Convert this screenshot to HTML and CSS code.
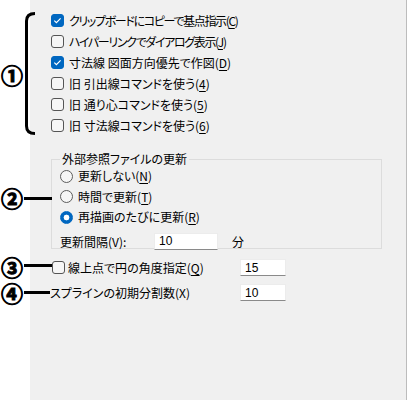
FILE: index.html
```html
<!DOCTYPE html>
<html lang="ja">
<head>
<meta charset="utf-8">
<link rel="stylesheet" href="styles.css">
</head>
<body>
<div class="page">
  <div class="panel">
    <div class="checks">
      <label class="row"><input type="checkbox" class="cb" checked><span class="tight">クリップボードにコピーで基点指示(<u>C</u>)</span></label>
      <label class="row"><input type="checkbox" class="cb"><span class="tight">ハイパーリンクでダイアログ表示(<u>J</u>)</span></label>
      <label class="row"><input type="checkbox" class="cb" checked><span>寸法線 図面方向優先で作図(<u>D</u>)</span></label>
      <label class="row"><input type="checkbox" class="cb"><span>旧 引出線コマンドを使う(<u>4</u>)</span></label>
      <label class="row"><input type="checkbox" class="cb"><span>旧 通り心コマンドを使う(<u>5</u>)</span></label>
      <label class="row"><input type="checkbox" class="cb"><span>旧 寸法線コマンドを使う(<u>6</u>)</span></label>
    </div>
    <fieldset class="group">
      <legend>外部参照ファイルの更新</legend>
      <label class="row"><input type="radio" name="upd" class="rb"><span>更新しない(<u>N</u>)</span></label>
      <label class="row"><input type="radio" name="upd" class="rb"><span>時間で更新(<u>T</u>)</span></label>
      <label class="row"><input type="radio" name="upd" class="rb" checked><span>再描画のたびに更新(<u>R</u>)</span></label>
      <div class="interval"><span class="ilabel">更新間隔(V):</span><input class="num wide" value="10"><span class="unit">分</span></div>
    </fieldset>
    <div class="opt opt3"><label class="olabel"><input type="checkbox" class="cb"><span>線上点で円の角度指定(<u>Q</u>)</span></label><input class="num" value="15"></div>
    <div class="opt opt4"><span class="olabel">スプラインの初期分割数(X)</span><input class="num" value="10"></div>
  </div>

  <div class="note n1">①</div>
  <svg class="bracket" width="40" height="140" viewBox="0 0 40 140"><path d="M35 13.5 Q26.5 13.5 26.5 21 V126 Q26.5 133.5 35 133.5" fill="none" stroke="#000" stroke-width="3"/></svg>
  <div class="note n2">②</div><div class="line l2"></div>
  <div class="note n3">③</div><div class="line l3"></div>
  <div class="note n4">④</div><div class="line l4"></div>
</div>
</body>
</html>
```

FILE: styles.css
```css
* { box-sizing: border-box; }
html, body { margin: 0; padding: 0; background: #fff; }
body {
  font-family: "Noto Sans CJK JP", "Noto Sans", sans-serif;
  font-size: 12px;
  font-feature-settings: "palt";
  color: #000;
}
.page { position: relative; width: 407px; height: 400px; }
.panel {
  margin-left: 30px;
  width: 377px;
  height: 400px;
  background: #f0f0f0;
  border-right: 1px solid #bcbcbc;
  padding-top: 10px;
}
.checks { padding-left: 21px; }
.row {
  display: flex;
  align-items: center;
  height: 21px;
  line-height: 14px;
  white-space: nowrap;
}
.tight { letter-spacing: -1.35px; }
u { text-underline-offset: 2px; }
input.cb, input.rb {
  appearance: none;
  -webkit-appearance: none;
  margin: 0 5px 0 0;
  width: 13px;
  height: 13px;
  flex: none;
  border: 1px solid #555;
  background: #f6f6f6;
}
input.cb { border-radius: 3px; }
input.cb:checked {
  background: #0067c0 url("data:image/svg+xml,%3Csvg xmlns='http://www.w3.org/2000/svg' width='13' height='13'%3E%3Cpath d='M3.3 6.6 L5.4 8.6 L9.6 4.4' fill='none' stroke='white' stroke-width='1.2'/%3E%3C/svg%3E") center/13px 13px no-repeat;
  border-color: #0067c0;
}
input.rb { border-radius: 50%; border-color: #5c5c5c; }
input.rb:checked {
  background: radial-gradient(circle, #fff 0 2.6px, #0067c0 3.2px);
  border-color: #0067c0;
}
.group {
  margin: 16px 0 0 21px;
  width: 331px;
  height: 97px;
  border: 1px solid #dcdcdc;
  padding: 0 0 0 8px;
  min-width: 0;
}
.group legend {
  padding: 0 2px;
  margin-left: 0;
  line-height: 14px;
}
.group .row { height: 20.5px; }
.interval {
  display: flex;
  align-items: center;
  height: 23px;
  margin-top: 2px;
}
.ilabel { width: 94px; }
.num {
  font: inherit;
  font-family: "Liberation Sans", sans-serif;
  font-size: 12px;
  width: 46px;
  height: 17px;
  border: 1px solid #ececec;
  border-bottom-color: #8a8a8a;
  background: #fff;
  padding: 0 4px;
  color: #000;
  outline: none;
}
.num.wide { width: 64px; }
.unit { margin-left: 14px; }
.opt {
  display: flex;
  align-items: center;
  height: 25px;
}
.opt3 { margin-top: 6px; padding-left: 22px; }
.opt4 { padding-left: 20px; }
.olabel { display: flex; align-items: center; white-space: nowrap; }
.opt4 .olabel { width: 190px; }
.opt3 .olabel { width: 188px; }
.opt .cb { margin-right: 3px; }

.note {
  position: absolute;
  left: 1px;
  width: 22px;
  font-size: 22px;
  font-weight: bold;
  line-height: 20px;
  height: 20px;
  text-align: center;
  font-feature-settings: normal;
  -webkit-text-stroke: 1px #000;
}
.n1 { top: 64px; }
.n2 { top: 187px; }
.n3 { top: 256px; }
.n4 { top: 282px; }
.bracket { position: absolute; left: 0; top: 0; }
.line { position: absolute; height: 3px; background: #000; left: 24px; }
.l2 { top: 197px; width: 28px; }
.l3 { top: 264px; width: 28px; }
.l4 { top: 291px; width: 26px; }
```
